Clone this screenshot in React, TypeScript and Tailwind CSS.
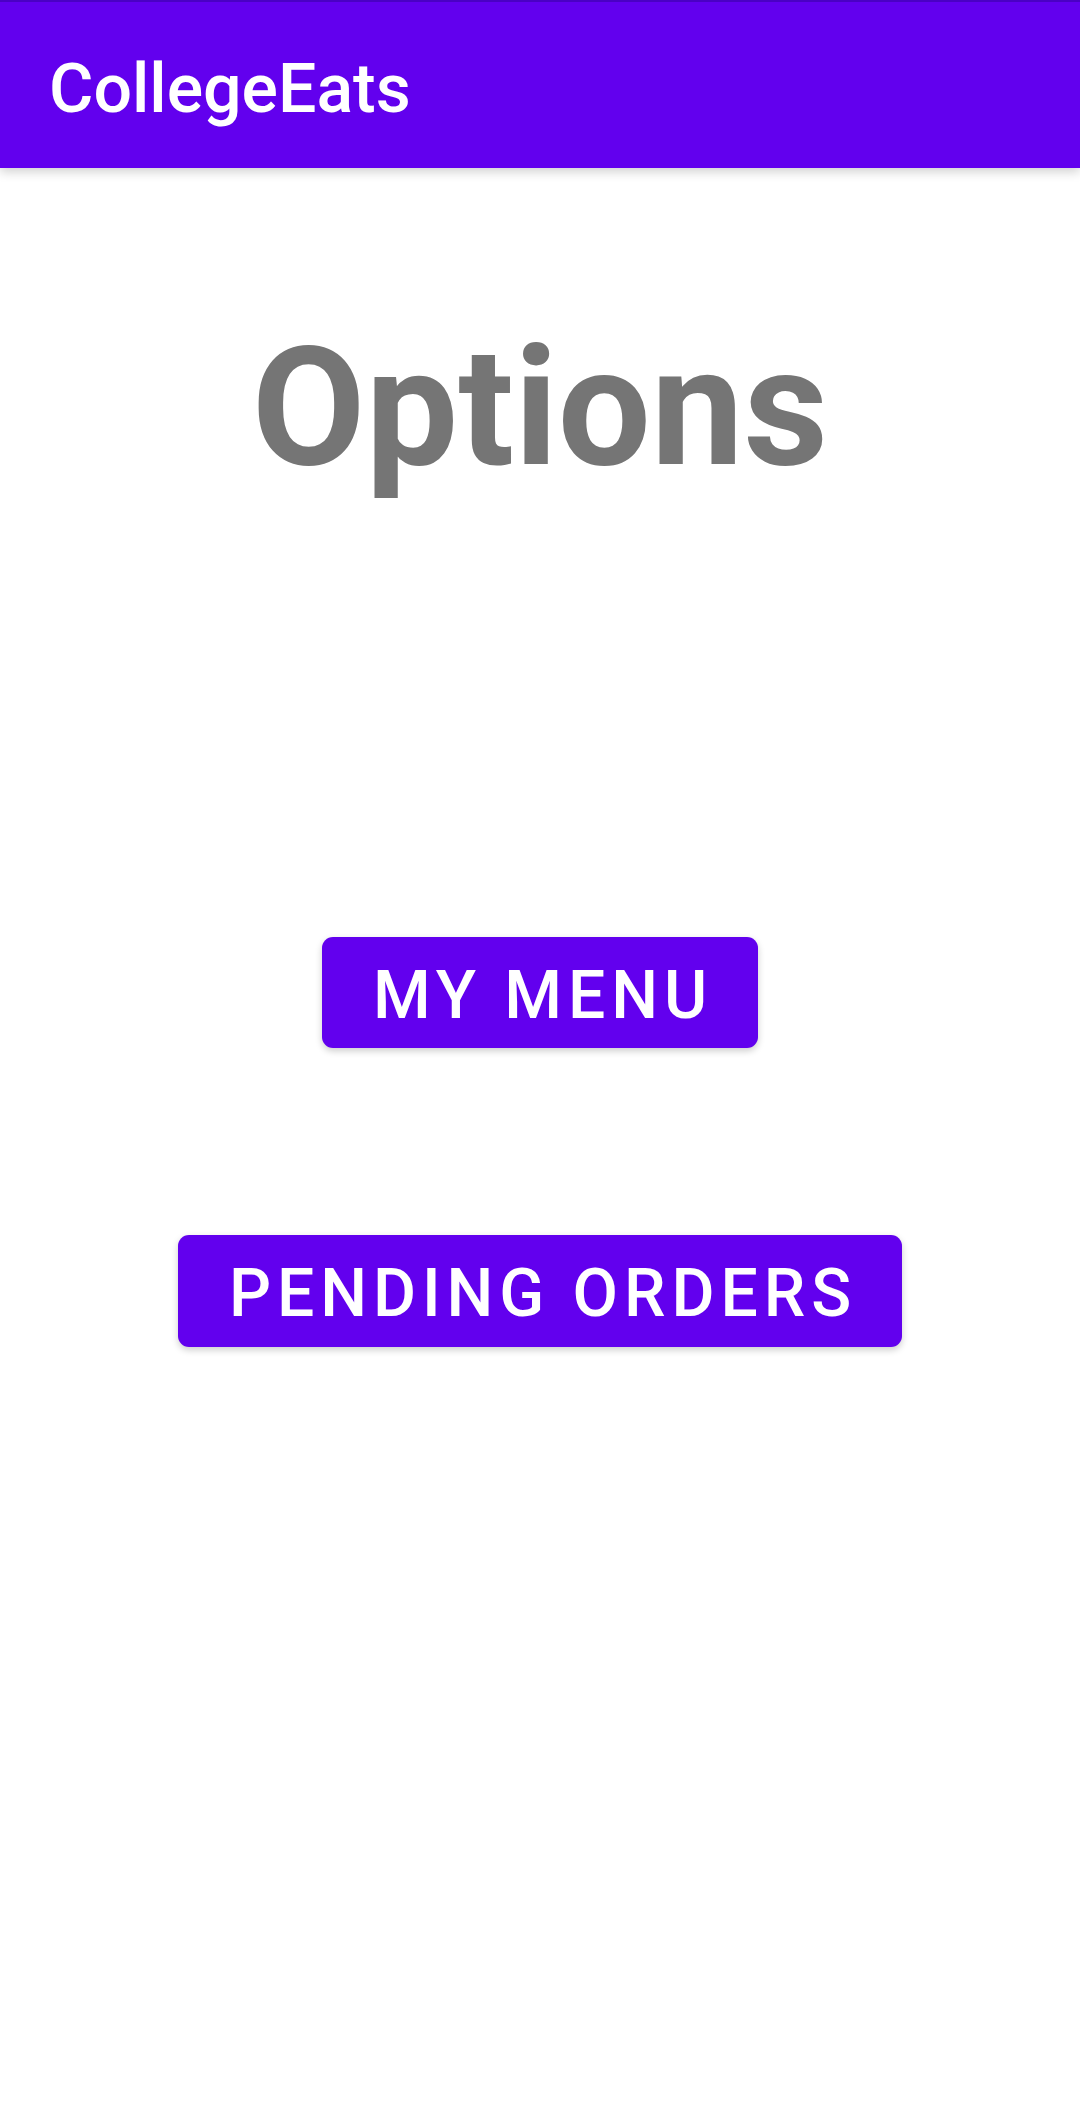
export default function App() {
  return (
    <div className="flex min-h-[2114px] w-full flex-col bg-white font-['Roboto','Liberation_Sans',sans-serif]">
      {/* app bar */}
      <header className="relative z-10 h-[168px] w-full border-t-2 border-[#4a00c4] bg-[#6200EE] pl-[49px] pt-[53px] shadow-[0_4px_10px_rgba(0,0,0,0.18)]">
        <h1 className="text-[68px] font-medium leading-[68px] text-white">CollegeEats</h1>
      </header>

      <main className="flex flex-col items-center">
        <h2 className="mt-[157px] text-[165px] font-bold leading-[165px] text-[#757575]">Options</h2>

        <button className="mt-[447px] h-[111px] rounded-[11px] bg-[#6200EE] pl-[51px] pr-[45px] pb-[19px] pt-[26px] text-[66px] font-medium uppercase leading-[66px] tracking-[0.09em] text-white shadow-[0_3px_7px_rgba(0,0,0,0.2)]">
          My Menu
        </button>

        <button className="mt-[187px] h-[112px] rounded-[11px] bg-[#6200EE] pl-[51px] pr-[45px] pb-[20px] pt-[26px] text-[66px] font-medium uppercase leading-[66px] tracking-[0.09em] text-white shadow-[0_3px_7px_rgba(0,0,0,0.2)]">
          Pending Orders
        </button>
      </main>
    </div>
  );
}
